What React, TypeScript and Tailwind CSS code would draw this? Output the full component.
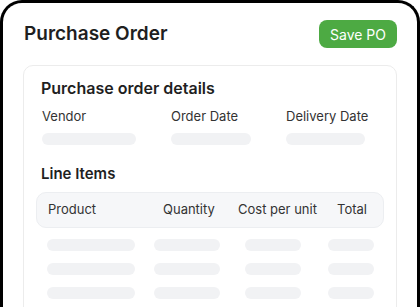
const font = { fontFamily: "Inter, 'Noto Sans', sans-serif" };

function Bar({ className }: { className: string }) {
  return <div className={`h-[12px] rounded-full bg-[#f1f2f4] ${className}`} />;
}

export default function App() {
  const rows = [0, 1, 2];
  return (
    <div className="h-[307px] w-[420px] overflow-hidden bg-white" style={font}>
      <div className="h-[340px] rounded-t-[22px] border-[3px] border-b-0 border-black px-[20px] pt-[17px]">
        <div className="flex items-center justify-between pl-[1px]">
          <h1 className="text-[19px] font-semibold text-[#1f1f1f]">Purchase Order</h1>
          <button className="h-[28px] rounded-[8px] bg-[#4daa43] px-[11px] text-[14px] text-white">
            Save PO
          </button>
        </div>

        <div className="mt-[16px] h-[300px] rounded-[10px] border border-[#ececec] px-[12px] pt-[10px]">
          <h2 className="pl-[5px] text-[16px] font-semibold leading-[24px] text-[#1f1f1f]">
            Purchase order details
          </h2>
          <div className="mt-[6px] flex gap-[35px] whitespace-nowrap pl-[6px] text-[13px] text-[#333]">
            <div className="w-[94px]">
              <p className="leading-[20px]">Vendor</p>
              <Bar className="mt-[7px] w-[94px]" />
            </div>
            <div className="w-[80px]">
              <p className="leading-[20px]">Order Date</p>
              <Bar className="mt-[7px] w-[80px]" />
            </div>
            <div className="w-[82px]">
              <p className="leading-[20px]">Delivery Date</p>
              <Bar className="mt-[7px] w-[79px]" />
            </div>
          </div>

          <h2 className="mt-[18px] pl-[5px] text-[15px] font-semibold leading-[22px] text-[#1f1f1f]">
            Line Items
          </h2>
          <div className="mt-[7px] grid h-[36px] grid-cols-[115px_75px_99px_auto] items-center rounded-[10px] border border-[#eceef1] bg-[#f6f7f9] pl-[11px] text-[13px] text-[#333]">
            <span>Product</span>
            <span>Quantity</span>
            <span>Cost per unit</span>
            <span>Total</span>
          </div>
          <div className="mt-[11px] flex flex-col gap-[12px]">
            {rows.map((r) => (
              <div key={r} className="grid grid-cols-[107px_91px_83px_auto] pl-[11px]">
                <Bar className="w-[88px]" />
                <Bar className="w-[66px]" />
                <Bar className="w-[56px]" />
                <Bar className="w-[46px]" />
              </div>
            ))}
          </div>
        </div>
      </div>
    </div>
  );
}
